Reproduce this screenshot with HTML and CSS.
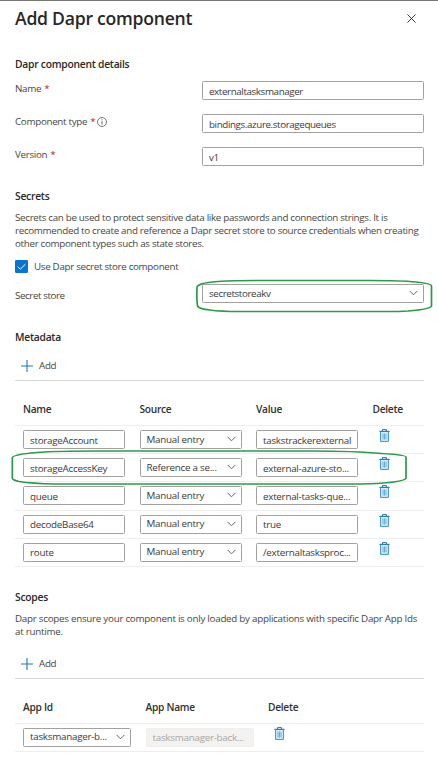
FILE: index.html
```html
<!DOCTYPE html>
<html lang="en">
<head>
<meta charset="utf-8">
<title>Add Dapr component</title>
<link rel="stylesheet" href="styles.css">
</head>
<body>
<svg class="defs" width="0" height="0" aria-hidden="true">
  <symbol id="chevron" viewBox="0 0 10 6"><path d="M.7.7 5 5 9.3.7" fill="none" stroke="#555" stroke-width="1"/></symbol>
  <symbol id="plus" viewBox="0 0 12 12"><path d="M6 0v12M0 6h12" fill="none" stroke="#2277b5" stroke-width="1.1"/></symbol>
  <symbol id="trash" viewBox="0 0 11 13"><path d="M1.6 2.5h7.8v9.9H1.6z" fill="#d8effb" stroke="#3a8fc6" stroke-width="1"/><path d="M.3 2.3h10.4M3.5 2V.6h4V2" fill="none" stroke="#2578ad" stroke-width="1"/><path d="M4 4.5v6M5.5 4.5v6M7 4.5v6" stroke="#4c9bcd" stroke-width=".8"/></symbol>
</svg>
<main class="panel">
  <header class="head">
    <h1>Add Dapr component</h1>
    <svg class="close" viewBox="0 0 10 10"><path d="M.5.5l9 9M9.5.5l-9 9" stroke="#222" stroke-width="1"/></svg>
  </header>

  <h2 class="h-details">Dapr component details</h2>
  <div class="field"><label>Name <i>*</i></label><div class="input"><span>externaltasksmanager</span></div></div>
  <div class="field"><label>Component type <i>*</i><svg class="info" viewBox="0 0 10 10"><circle cx="5" cy="5" r="4.5" fill="none" stroke="#555" stroke-width=".8"/><path d="M5 4.2v3.4M5 2.3v1" stroke="#555" stroke-width=".9"/></svg></label><div class="input"><span>bindings.azure.storagequeues</span></div></div>
  <div class="field"><label>Version <i>*</i></label><div class="input"><span>v1</span></div></div>

  <h2 class="h-secrets">Secrets</h2>
  <p>Secrets can be used to protect sensitive data like passwords and connection strings. It is<br>recommended to create and reference a Dapr secret store to source credentials when creating<br>other component types such as state stores.</p>
  <div class="check"><svg class="box" viewBox="0 0 13 13"><rect width="13" height="13" rx="1.2" fill="#0b74cf"/><path d="M2.7 6.7 5.3 9.2 10.4 4.2" fill="none" stroke="#fff" stroke-width="1"/></svg><span>Use Dapr secret store component</span></div>
  <div class="field store"><label>Secret store</label><div class="input select"><span>secretstoreakv</span><svg class="chev"><use href="#chevron"/></svg></div>
    <svg class="mark mark-store" viewBox="0 0 238 36"><path d="M2 9Q1 4 23 2.500Q40 1.500 65 1.500H175Q206 1.500 221 3Q236.500 4.500 236.500 7V27Q236.500 30 213 32Q205 32.500 190 32.500H45Q25 32.500 15 31Q4 30 2.500 27Q1.500 20 2 9Z"/></svg>
  </div>

  <h2 class="h-meta">Metadata</h2>
  <div class="add"><svg><use href="#plus"/></svg><span>Add</span></div>
  <section class="table meta">
    <div class="row th"><b>Name</b><b>Source</b><b>Value</b><b>Delete</b></div>
    <div class="row"><div class="input">storageAccount</div><div class="input select"><span>Manual entry</span><svg class="chev"><use href="#chevron"/></svg></div><div class="input">taskstrackerexternal</div><svg class="trash"><use href="#trash"/></svg></div>
    <div class="row"><div class="input">storageAccessKey</div><div class="input select"><span>Reference a se...</span><svg class="chev"><use href="#chevron"/></svg></div><div class="input">external-azure-sto...</div><svg class="trash"><use href="#trash"/></svg>
      <svg class="mark mark-row" viewBox="0 0 397 36"><path d="M2.300 8Q2.300 4.500 27 2.500Q45 1 90 1H300Q345 1 372 3.500Q396 5 396 7V28Q396 31 374 33Q362 34 340 34H45Q22 33.500 9 31.500Q2.300 30 2.300 28Z"/></svg></div>
    <div class="row"><div class="input">queue</div><div class="input select"><span>Manual entry</span><svg class="chev"><use href="#chevron"/></svg></div><div class="input">external-tasks-que...</div><svg class="trash"><use href="#trash"/></svg></div>
    <div class="row"><div class="input">decodeBase64</div><div class="input select"><span>Manual entry</span><svg class="chev"><use href="#chevron"/></svg></div><div class="input">true</div><svg class="trash"><use href="#trash"/></svg></div>
    <div class="row"><div class="input">route</div><div class="input select"><span>Manual entry</span><svg class="chev"><use href="#chevron"/></svg></div><div class="input">/externaltasksproc...</div><svg class="trash"><use href="#trash"/></svg></div>
  </section>

  <h2 class="h-scopes">Scopes</h2>
  <p class="scope-text">Dapr scopes ensure your component is only loaded by applications with specific Dapr App Ids<br>at runtime.</p>
  <div class="add add-scope"><svg><use href="#plus"/></svg><span>Add</span></div>
  <section class="table scopes">
    <div class="row th"><b>App Id</b><b>App Name</b><b>Delete</b></div>
    <div class="row"><div class="input select"><span>tasksmanager-b...</span><svg class="chev"><use href="#chevron"/></svg></div><div class="input off">tasksmanager-back...</div><svg class="trash"><use href="#trash"/></svg></div>
  </section>
</main>
</body>
</html>
```
FILE: styles.css
```css
* { box-sizing: border-box; }
body { margin: 0; background: #fff; color: #484644; font-family: "Open Sans", "Noto Sans", sans-serif; font-size: 9.8px; line-height: 13px; letter-spacing: -0.31px; }
.defs { display: block; }
.panel { height: 778px; padding: 0 14px 0 15px; border-top: 1px solid #777; overflow: hidden; }
svg { flex: none; overflow: visible; }
h1, h2, p { margin: 0; white-space: nowrap; }
.head { display: flex; justify-content: space-between; height: 56px; padding: 5px 8px 0 0; }
h1 { font-size: 17.6px; line-height: 24px; font-weight: 600; color: #292827; letter-spacing: -0.25px; }
.close { width: 9px; height: 9px; margin-top: 8px; }
h2 { height: 14px; font-size: 10.3px; line-height: 14px; font-weight: 600; color: #292827; letter-spacing: -0.25px; }
.h-details { margin-bottom: 10px; }
.field { position: relative; display: grid; grid-template-columns: 187px 222px; height: 19px; margin-bottom: 14px; }
label { display: flex; align-items: center; height: 15px; gap: 3px; }
label i { font-style: normal; color: #a4262c; }
.info { width: 10px; height: 10px; margin-left: -1px; }
.input { display: flex; align-items: center; height: 19px; min-width: 0; padding: 1px 6px 0; border: 1px solid #a3a19f; border-radius: 1.5px; white-space: nowrap; color: #3b3a39; letter-spacing: -0.39px; }
.select { justify-content: space-between; padding: 0 5px 1px 6px; }
.chev { width: 9px; height: 6px; }
.h-secrets { margin-top: 23px; margin-bottom: 8px; }
.check { display: flex; align-items: center; gap: 6px; height: 13px; margin: 10px 0 11px; }
.box { width: 13px; height: 13px; }
.store label { height: 22px; letter-spacing: -0.42px; }
.mark { position: absolute; fill: none; stroke: #2c9a4b; stroke-width: 1.7; }
.mark-store { left: 180px; top: -5px; width: 238px; height: 36px; }
.h-meta { margin-top: 27px; }
.add { display: flex; align-items: center; gap: 6px; height: 37px; padding: 7px 0 0 6px; border-bottom: 1px solid #d8d8d8; }
.add svg { width: 12px; height: 12px; }
.row { position: relative; display: grid; grid-template-columns: 102px 102px 102px 36px; column-gap: 14.500px; height: 28.200px; padding: 4px 0 0 8px; border-bottom: 1px solid #eee; }
.table .input { letter-spacing: -0.25px; }
.th { height: 45px; padding-top: 22px; }
.th b { font-size: 10.2px; font-weight: 600; color: #323130; letter-spacing: -0.28px; }
.trash { width: 11px; height: 13px; margin: -1px 0 0 6px; }
.mark-row { left: -5px; top: -4px; width: 397px; height: 36px; }
.h-scopes { margin-top: 23px; }
.scope-text { margin-top: 8px; letter-spacing: -0.26px; }
.add-scope { height: 41px; padding-top: 12px; }
.scopes .row { grid-template-columns: 108px 108px 36px; }
.off { border-color: #f0efee; background: #f3f2f1; color: #a8a6a4; }
```
